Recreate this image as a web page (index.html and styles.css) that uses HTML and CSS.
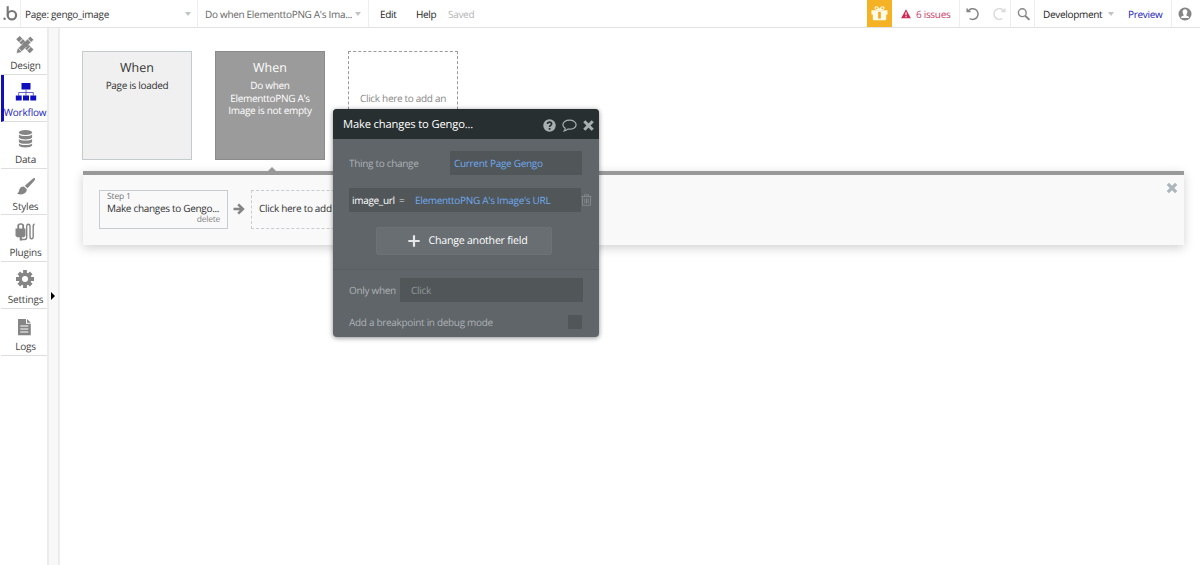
FILE: index.html
```html
<!DOCTYPE html>
<html lang="en">
<head>
<meta charset="utf-8">
<title>Workflow editor</title>
<link rel="stylesheet" href="styles.css">
</head>
<body>
<header class="topbar">
  <div class="logo">
    <svg width="17" height="18" viewBox="0 0 17 18"><circle cx="3.6" cy="13.8" r="1.2" fill="#777"/><path d="M6.700 1.200V10" fill="none" stroke="#777" stroke-width="2.100"/><circle cx="10.900" cy="10.200" r="4.200" fill="none" stroke="#777" stroke-width="2.200"/></svg>
  </div>
  <div class="picker page-picker"><span>Page: gengo_image</span><i class="caret"></i></div>
  <div class="picker event-picker"><span>Do when ElementtoPNG A's Ima...</span><i class="caret"></i></div>
  <nav class="menu"><span class="edit">Edit</span><span class="help">Help</span><span class="saved">Saved</span></nav>
  <div class="gift">
    <svg width="17" height="17" viewBox="0 0 17 17" fill="#fffbe8"><path d="M.5 5.200h16v4.300H.5zM1.800 9h13.400v5.300q0 1-1 1H2.800q-1 0-1-1z"/><path d="M8.500 5.500C5 5.500 3.500 4.400 3.500 3c0-2.200 3.500-2.700 5 .8C10 .3 13.500.8 13.500 3c0 1.400-1.500 2.500-5 2.500z"/><path d="M7.200 6.800h2.600v6.800H7.200z" fill="#f2a91c"/><circle cx="5.700" cy="3.200" r=".9" fill="#f2a91c"/><circle cx="11.300" cy="3.200" r=".9" fill="#f2a91c"/></svg>
  </div>
  <div class="issues">
    <svg width="10" height="10" viewBox="0 0 10 10"><path d="M5 .3 9.900 9.300H.1z" fill="#cf2a55"/><path d="M5 3.200v3M5 7v1.200" stroke="#fff" stroke-width="1.100"/></svg>
    <span>6 issues</span>
  </div>
  <div class="history">
    <svg width="14" height="14" viewBox="0 0 14 14" fill="none" stroke="#858585" stroke-width="1.500"><path d="M1.200 1.500v3h3.500M2 4.300A5.400 5.400 0 1 1 3.600 11.500"/></svg>
    <svg width="14" height="14" viewBox="0 0 14 14" fill="none" stroke="#d9d9d9" stroke-width="1.400"><path d="M12.800 1.500v3H9.300M12 4.300A5.400 5.400 0 1 0 10.400 11.500"/></svg>
  </div>
  <div class="search">
    <svg width="14" height="14" viewBox="0 0 14 14" fill="none" stroke="#888"><circle cx="5.300" cy="5.700" r="3.900" stroke-width="1.400"/><path d="m8.200 8.700 4.200 4.200" stroke-width="2"/></svg>
  </div>
  <div class="version"><span class="dev">Development</span><i class="caret"></i><span class="preview">Preview</span></div>
  <div class="account">
    <svg width="14" height="14" viewBox="0 0 14 14"><circle cx="7" cy="7" r="6.500" fill="#858585"/><path d="M7 2.300c1.500 0 2.400 1 2.400 2.500S8.500 7.600 8.300 8l.1.600 2.500 1.100v1.400H3.100V9.700l2.500-1.100L5.700 8C5.500 7.600 4.600 6.300 4.600 4.800S5.500 2.300 7 2.300z" fill="#fff"/></svg>
  </div>
</header>

<div class="workspace">
  <aside class="sidebar">
    <div class="tab">
      <svg width="20" height="20" viewBox="0 0 20 20"><path d="M1.200 4.200 4.700.9 18.500 14.500l-3.700 3.800z" fill="#858585"/><path d="m4.300 7.200 3.200-3.100M12.300 15l3.200-3" stroke="#fff" stroke-width="1"/><path d="M15.300 1.200 18.800 4.800 5.800 17.600 1.200 18.500l1-4.500z" fill="#858585" stroke="#fff" stroke-width=".7"/><path d="m12.700 4 3.400 3.400M3.500 13.300l3.500 3.500" stroke="#fff" stroke-width=".9"/><path d="m8.700 7.300 4 4" stroke="#858585" stroke-width="3"/></svg>
      <span>Design</span>
    </div>
    <div class="tab active">
      <svg width="22" height="20" viewBox="0 0 22 20" fill="#0f0fbd"><path d="M6.500 1h9v6.500h-9zM.8 13.500h5.900v5H.8zM8 13.500h6v5H8zM15.300 13.500h5.900v5h-5.900z"/><path d="M11 7.500V14M3.700 14v-3.500h14.600V14" fill="none" stroke="#5555c8" stroke-width=".9"/></svg>
      <span>Workflow</span>
    </div>
    <div class="tab">
      <svg width="20" height="20" viewBox="0 0 20 20" fill="#858585"><ellipse cx="10.500" cy="3.400" rx="6.600" ry="2.500"/><path d="M3.900 5.500c1.800 2 11.400 2 13.200 0v3c-1 2.600-12.200 2.600-13.200 0zM3.900 10c1.800 2 11.400 2 13.200 0v2.900c-1 2.600-12.200 2.600-13.200 0zM3.900 14.400c1.800 2 11.400 2 13.200 0v2.200c-1 2.600-12.200 2.600-13.200 0z"/></svg>
      <span>Data</span>
    </div>
    <div class="tab">
      <svg width="20" height="20" viewBox="0 0 20 20" fill="#858585"><path d="M19.800 2.100c.7.900.1 1.900-.7 2.900L12.500 12.300 9.800 9.700l7.400-6.500c1-1 2-1.700 2.600-1.100zM8.900 10.500l2.900 2.700c.1 4.800-5.600 6.500-9.800 4.200 2.200-.9 1.800-3 2.700-4.700.8-1.500 2.400-2.300 4.200-2.200z"/></svg>
      <span>Styles</span>
    </div>
    <div class="tab">
      <svg width="20" height="20" viewBox="0 0 20 20" fill="#858585"><path d="M.5 6.500h10v7.200L9 15.300H2L.5 13.700zM2.300 3h1.900v4H2.300zM7.200 3h1.900v4H7.200zM4.700 15h2.200v3.500H4.700z"/><path d="M2.800 3.200Q5.700.9 8.700 3.200M5.700 17.500h4c1.700 0 2-1 2-2.500V4.500c0-3 3.300-3 3.300 0v10c0 3 3.200 3 3.200 0V5c0-2 .3-2.700 1.500-2.700" fill="none" stroke="#858585" stroke-width="1.400"/></svg>
      <span>Plugins</span>
    </div>
    <div class="tab">
      <svg width="20" height="20" viewBox="0 0 20 20"><g stroke="#858585" stroke-width="3.800"><path d="M10 1v18M1 10h18M3.800 3.800l12.400 12.400M16.200 3.800 3.800 16.200"/></g><circle cx="10" cy="10" r="6.500" fill="#858585"/><circle cx="10" cy="10" r="3" fill="#fff"/></svg>
      <span>Settings</span>
    </div>
    <div class="tab">
      <svg width="20" height="20" viewBox="0 0 20 20"><path d="M3 3h8v4.700h4.800v11.500H3zM12 3l3.800 3.800H12z" fill="#858585"/><path d="M5.300 10h8M5.300 13h8M5.300 16h8" stroke="#fff" stroke-width="1.200"/></svg>
      <span>Logs</span>
    </div>
  </aside>
  <div class="gutter"><i class="expand"></i></div>

  <main class="canvas">
    <section class="events">
      <article class="event"><h2>When</h2><p>Page is loaded</p></article>
      <article class="event selected"><h2>When</h2><p>Do when<br>ElementtoPNG A's<br>Image is not empty</p></article>
      <article class="event placeholder"><p>Click here to add an</p></article>
    </section>
    <section class="actions">
      <div class="step">
        <span class="step-no">Step 1</span>
        <span class="step-name">Make changes to Gengo...</span>
        <span class="step-delete">delete</span>
      </div>
      <svg class="arrow" width="12" height="12" viewBox="0 0 12 12" fill="none" stroke="#858585" stroke-width="2.600"><path d="M.5 6h9M5.200 1.300 9.900 6l-4.700 4.700"/></svg>
      <div class="step step-new">Click here to add</div>
      <svg class="close" width="12" height="12" viewBox="0 0 12 12" stroke="#adb7bb" stroke-width="3.200"><path d="m1.800 1.800 8.400 8.400M10.200 1.800 1.800 10.200"/></svg>
    </section>

    <div class="editor">
      <div class="editor-head">
        <span>Make changes to Gengo...</span>
        <svg width="13" height="13" viewBox="0 0 13 13"><circle cx="6.500" cy="6.500" r="6.200" fill="#a9b0b2"/><path d="M4.500 5c.1-2.500 4.100-2.300 4.100 0 0 1.500-2 1.400-2 3.100" fill="none" stroke="#272f31" stroke-width="1.700"/><path d="M5.700 9h1.800v1.700H5.700z" fill="#272f31"/></svg>
        <svg width="15" height="13" viewBox="0 0 15 13" fill="none" stroke="#a9b0b2" stroke-width="1.200"><path d="M7.500 1.200c3.700 0 6.600 2 6.600 4.500s-2.900 4.500-6.600 4.500l-1.700-.1c-1 1-2.100 1.600-3.600 1.800.7-.8 1-1.500 1-2.600C1.800 8.400.9 7.200.9 5.700c0-2.500 2.900-4.500 6.600-4.500z"/></svg>
        <svg width="11" height="11" viewBox="0 0 11 11" stroke="#a9b0b2" stroke-width="3"><path d="m1.300 1.300 8.400 8.400M9.700 1.300 1.300 9.700"/></svg>
      </div>
      <div class="editor-body">
        <div class="row thing"><label>Thing to change</label><div class="field">Current Page Gengo</div></div>
        <div class="row assign">
          <div class="field"><b>image_url</b><em>=</em><span>ElementtoPNG A's Image's URL</span></div>
          <svg width="11" height="12" viewBox="0 0 11 12" fill="none" stroke="#81878a" stroke-width="1"><path d="M.5 2.500h10M3.500 2.300V.8h4v1.500M1.500 2.800v8.500h8V2.800M3.800 4.500v5M5.500 4.500v5M7.200 4.500v5"/></svg>
        </div>
        <div class="add-field"><svg width="12" height="12" viewBox="0 0 12 12" stroke="#e4e6e7" stroke-width="2.200"><path d="M6 .3v11.400M.3 6h11.400"/></svg><span>Change another field</span></div>
      </div>
      <div class="editor-foot">
        <div class="row condition"><label>Only when</label><div class="field">Click</div></div>
        <div class="row breakpoint"><label>Add a breakpoint in debug mode</label><i class="checkbox"></i></div>
      </div>
    </div>
  </main>
</div>
</body>
</html>
```
FILE: styles.css
```css
* { box-sizing: border-box; }
body { margin: 0; width: 1200px; height: 565px; overflow: hidden; background: #fff; color: #444; font: 10px/14px "Open Sans", "Noto Sans", sans-serif; letter-spacing: -.31px; text-rendering: geometricPrecision; display: flex; flex-direction: column; }
svg { display: block; flex: none; }
h2, p { margin: 0; font-weight: 400; }
.caret { flex: none; border: 3.5px solid transparent; border-top: 4px solid #bfc4c8; border-bottom: 0; }

.topbar { display: flex; flex: none; height: 28px; border-bottom: 1px solid #e2e2e2; align-items: stretch; }
.topbar > div, .menu { display: flex; align-items: center; }
.logo { width: 21px; border-right: 1px solid #eee; padding-left: 1px; }
.picker { justify-content: space-between; border-right: 1px solid #eee; white-space: nowrap; }
.page-picker { width: 177px; padding: 0 6px 0 4px; color: #333; }
.event-picker { width: 171px; padding: 0 7px 0 7px; color: #666; }
.menu { flex: 1; color: #222; }
.edit { width: 36px; margin-left: 11px; }
.help { width: 32px; }
.saved { color: #b5b5b5; }
.gift { width: 25px; justify-content: center; background: #f5b225; }
.issues { width: 68px; padding-left: 9px; gap: 5px; color: #c9406a; border-right: 1px solid #eee; }
.history { width: 51px; padding-left: 6px; gap: 12px; border-right: 1px solid #eee; }
.search { width: 24px; padding-left: 6px; border-right: 1px solid #eee; }
.version { width: 137px; padding-left: 8px; color: #222; border-right: 1px solid #eee; }
.dev { width: 65px; }
.preview { margin-left: 14px; color: #2222b8; }
.account { width: 28px; padding-left: 6px; }

.workspace { display: flex; flex: 1; min-height: 0; }
.sidebar { width: 47px; }
.tab { height: 46.85px; margin-left: 1px; padding: 7px 0 0 2px; display: flex; flex-direction: column; align-items: center; border-bottom: 1px solid #dedede; color: #444; letter-spacing: -.2px; }
.tab span { margin-top: 3px; padding-left: 1px; }
.tab.active { border-left: 3px solid #0f0fbd; padding-left: 0; color: #2222b8; }
.tab.active span { margin-left: -2px; }
.gutter { width: 13px; background: #f8f8f8; border-left: 2px solid #ececec; border-right: 2px solid #ececec; padding: 264px 0 0 2px; }
.expand { display: block; width: 0; border: 4px solid transparent; border-left-color: #000; border-right: 0; }

.canvas { flex: 1; position: relative; padding: 23px 16px 0 22px; }
.events { display: flex; gap: 23px; height: 120px; }
.event { width: 110px; height: 109px; text-align: center; background: #f0f0f0; border: 1px solid #c4cbcb; padding-top: 7px; color: #333; }
.event h2 { font-size: 12.500px; letter-spacing: 0; line-height: 18px; margin-bottom: 1px; }
.event p { line-height: 12.500px; padding-top: 1px; }
.event.selected { background: #9b9b9b; border-color: #8b8b8b; color: #fff; }
.event.placeholder { background: #fff; border: 1px dashed #999; color: #888; padding-top: 39px; }
.actions { position: relative; display: flex; align-items: flex-start; height: 74px; margin-left: 1px; padding: 15px 6px 0 16px; border-top: 4px solid #999; background: #f9f9f9; box-shadow: 0 3px 10px rgba(0,0,0,.18); }
.actions::before { content: ""; position: absolute; left: 184px; top: -8px; border: 5px solid transparent; border-top: 0; border-bottom-color: #999; }
.step { width: 129px; height: 39px; border: 1px solid #c7cdcf; padding: 0 7px; display: flex; flex-direction: column; color: #333; white-space: nowrap; }
.step-no { font-size: 8.500px; letter-spacing: -.15px; line-height: 11px; color: #777; }
.step-name { line-height: 13px; }
.step-delete { font-size: 8.500px; letter-spacing: -.25px; line-height: 9px; color: #888; align-self: flex-end; }
.arrow { margin: 13px 6px 0 5px; }
.step-new { border-style: dashed; padding-top: 10px; }
.close { margin-left: auto; margin-top: -8px; }

.editor { position: absolute; left: 273px; top: 81px; width: 266px; height: 228px; border-radius: 4px; background: #5f6569; box-shadow: 0 1px 5px rgba(0,0,0,.45); color: #adb2b5; overflow: hidden; }
.editor-head { height: 30px; background: #272f31; display: flex; align-items: center; gap: 6px; padding: 2px 5px 0 10px; }
.editor-head span { color: #fff; font-size: 11.200px; letter-spacing: -.15px; margin-right: auto; }
.editor-body { height: 131px; padding: 12px 7px 0 16px; border-bottom: 1px solid #575d61; }
.row { display: flex; align-items: center; white-space: nowrap; }
.field { height: 24px; background: #515659; display: flex; align-items: center; color: #6eaaf0; }
.thing label { width: 101px; }
.thing .field { width: 132px; padding-left: 4px; }
.assign { margin-top: 13px; }
.assign .field { width: 232px; padding-left: 3px; }
.assign b { font-weight: 400; color: #fff; width: 47px; }
.assign em { font-style: normal; color: #ddd; width: 16px; }
.add-field { width: 176px; height: 28px; margin: 15px 0 0 27px; padding-left: 8px; display: flex; align-items: center; justify-content: center; gap: 8px; background: #686e72; border: 1px solid #6c7276; border-radius: 2px; color: #fff; font-size: 10.600px; letter-spacing: -.22px; }
.editor-foot { padding: 8px 16px 0 16px; }
.condition label { width: 51px; }
.condition .field { flex: 1; padding-left: 11px; color: #92989b; }
.breakpoint { justify-content: space-between; margin-top: 13px; padding-right: 1px; }
.checkbox { width: 14px; height: 14px; background: #515659; }
```
